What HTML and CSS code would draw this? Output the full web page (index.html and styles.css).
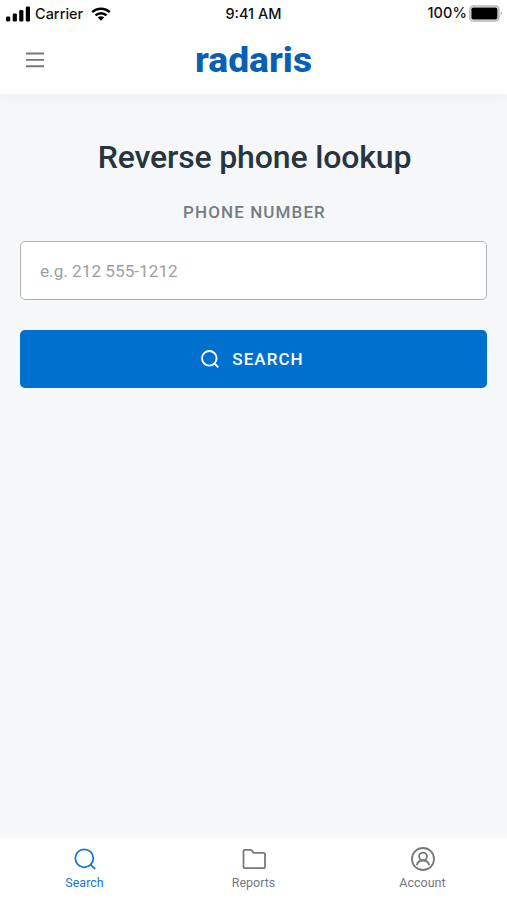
FILE: index.html
```html
<!DOCTYPE html>
<html lang="en">
<head>
<meta charset="utf-8">
<meta name="viewport" content="width=device-width, initial-scale=1">
<title>Reverse phone lookup</title>
<link rel="stylesheet" href="styles.css">
</head>
<body>
<header class="top">
  <div class="status">
    <div class="carrier">
      <svg class="signal" width="25" height="16" viewBox="0 0 25 16"><rect x="0" y="10.500" width="4.200" height="5" rx="1.200"/><rect x="6.700" y="7.500" width="4.200" height="8" rx="1.200"/><rect x="13.200" y="4" width="4.200" height="11.500" rx="1.200"/><rect x="19.800" y="0.500" width="4.200" height="15" rx="1.200"/></svg>
      <span class="carrier-name">Carrier</span>
      <svg class="wifi" width="20" height="14" viewBox="0 0 20 14"><path d="M1.200 5.200C6 .6 14 .6 18.800 5.200M4.500 8.300C7.600 5.400 12.400 5.400 15.500 8.300" fill="none" stroke="#000" stroke-width="2.500"/><path d="M6.800 10.400C8.600 8.800 11.400 8.800 13.200 10.400L10 13.700Z"/></svg>
    </div>
    <span class="time">9:41 AM</span>
    <div class="power">
      <span>100%</span>
      <svg width="34" height="17" viewBox="0 0 34 17"><rect x=".9" y=".9" width="29" height="15.200" rx="3.600" fill="#fff" stroke="#b4b4b4" stroke-width="1.500"/><rect x="2.400" y="2.600" width="26" height="11.800" rx="1.600"/><path d="M31.800 6.300q2 2.200 0 4.400z" fill="#999"/></svg>
    </div>
  </div>
  <div class="bar">
    <svg class="menu" width="18" height="16" viewBox="0 0 18 16"><path d="M0 1.500h18M0 7.900h18M0 14.200h18" stroke="#74787c" stroke-width="1.900"/></svg>
    <svg class="logo" width="130" height="48" viewBox="0 0 130 48" role="img" aria-label="radaris"><text x="6" y="36" textLength="117" lengthAdjust="spacingAndGlyphs">radaris</text></svg>
  </div>
</header>
<main class="content">
  <h1>Reverse phone lookup</h1>
  <label for="phone">PHONE NUMBER</label>
  <input id="phone" type="tel" placeholder="e.g. 212 555-1212">
  <button type="button">
    <svg width="20" height="20" viewBox="0 0 20 20" fill="none" stroke="currentColor" stroke-width="1.900"><circle cx="9.300" cy="9.300" r="7.300"/><path d="M14.400 14.400l3.900 3.900"/></svg>
    <span>SEARCH</span>
  </button>
</main>
<nav class="tabs">
  <a class="tab active"><svg width="26" height="26" viewBox="0 0 26 26"><circle cx="12.300" cy="12.300" r="9"/><path d="M18.700 18.700l4.500 4.500"/></svg><span>Search</span></a>
  <a class="tab"><svg width="26" height="26" viewBox="0 0 26 26"><path d="M4.200 3.800h5.300q.8 0 1.300.7l1.700 2.300h9.800q1.700 0 1.700 1.700v12q0 1.700-1.700 1.700H4.200q-1.700 0-1.700-1.700v-15q0-1.700 1.700-1.700z"/></svg><span>Reports</span></a>
  <a class="tab"><svg width="26" height="26" viewBox="0 0 26 26"><circle cx="13" cy="13" r="11"/><circle cx="13" cy="10.500" r="3.900"/><path d="M6.800 19.300C8.300 12.900 17.700 12.900 19.200 19.300"/></svg><span>Account</span></a>
</nav>
</body>
</html>
```
FILE: styles.css
```css
* { box-sizing: border-box; }
body {
  margin: 0;
  height: 900px;
  display: flex;
  flex-direction: column;
  background: #f5f7f9;
  font-family: Roboto, "Liberation Sans", sans-serif;
}
svg { display: block; flex: none; }
.top { height: 94px; background: #fff; box-shadow: 0 2px 24px rgba(40, 50, 60, .04); }
.status {
  height: 26px;
  display: grid;
  grid-template-columns: 1fr auto 1fr;
  font: 500 14.5px/26px Inter, sans-serif;
  color: #111;
}
.carrier { display: flex; align-items: center; padding: 0 0 1px 6px; }
.carrier-name { margin: 0 8px 0 4px; font-weight: 450; }
.time { padding-top: 1px; font-size: 14.5px; }
.power { display: flex; justify-content: flex-end; gap: 2px; padding: 0 4px 2px 0; align-items: center; font-weight: 450; letter-spacing: .1px; }
.bar {
  height: 68px;
  display: grid;
  grid-template-columns: 1fr 130px 1fr;
  align-items: center;
}
.menu { margin-left: 26px; }
.logo text { font: 800 35px Roboto, sans-serif; fill: #0860b4; }
.content {
  flex: 1;
  display: flex;
  flex-direction: column;
  padding: 43px 20px 0;
}
h1 { margin: 0; padding-left: 2px; font-size: 32px; line-height: 40px; font-weight: 500; letter-spacing: -.15px; color: #263540; text-align: center; }
label { margin-top: 25px; padding-left: 2px; line-height: 20px; font-size: 17px; font-weight: 500; letter-spacing: 1.100px; color: #767d82; text-align: center; }
input {
  width: 100%;
  height: 59px;
  margin: 19px 0 30px;
  padding: 0 19px;
  border: 1.500px solid #adb1b4;
  border-radius: 5px;
  background: #fff;
  font: 400 17.200px Roboto, sans-serif;
}
input::placeholder { color: #9b9fa2; opacity: 1; }
button {
  height: 58px;
  display: flex;
  align-items: center;
  justify-content: center;
  gap: 12px;
  padding: 0 3px 0 0;
  border: 0;
  border-radius: 5px;
  background: #0070cf;
  color: #fff;
  font: 500 17px Roboto, sans-serif;
  letter-spacing: 1.05px;
}
.tabs { height: 62px; display: grid; grid-template-columns: repeat(3, 1fr); background: #fff; }
.tab { display: flex; flex-direction: column; align-items: center; padding-top: 8px; color: #74797d; font-size: 12.5px; line-height: 16px; }
.tab svg { fill: none; stroke: currentColor; stroke-width: 1.800; margin-bottom: 3px; }
.active { color: #1976ce; }
```
